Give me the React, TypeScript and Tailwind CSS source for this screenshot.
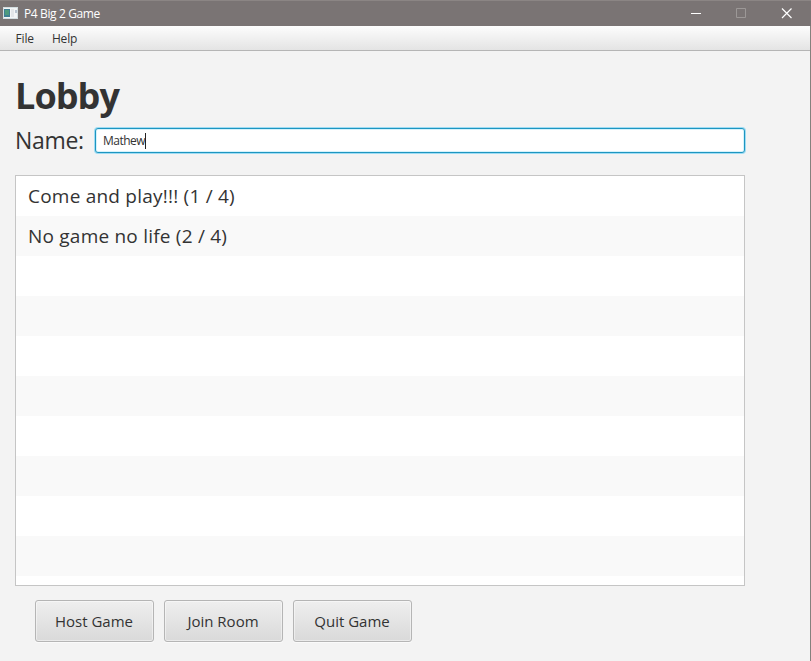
const rows = ["Come and play!!! (1 / 4)", "No game no life (2 / 4)", "", "", "", "", "", "", "", "", ""];

function TitleBar() {
  return (
    <header className="flex h-[26px] shrink-0 items-center border-t border-[#8b8584] bg-[#7a7474] pl-[3px] text-white">
      <svg width="15" height="12" viewBox="0 0 15 12" className="-mt-px shrink-0">
        <rect width="15" height="12" fill="#d3dde0" />
        <rect x="1" y="1" width="13" height="10" fill="#f3f5f6" />
        <rect x="1" y="2" width="6" height="8" fill="#3f7f92" />
        <rect x="2" y="3" width="4" height="5" fill="#4d9a7d" />
        <rect x="8" y="2" width="3" height="8" fill="#e3e6e9" />
        <rect x="12" y="3" width="2" height="3" fill="#b9c4d0" />
      </svg>
      <h1 className="ml-[6px] whitespace-nowrap text-[12px] leading-4 tracking-[-0.38px]">P4 Big 2 Game</h1>
      <div className="-mt-px ml-auto flex items-center">
        <svg width="120" height="24" viewBox="0 0 120 24" fill="none">
          <path d="M0 12.5H10" stroke="#fff" />
          <path d="M45.5 7.5h9v9h-9z" stroke="#9c9897" />
          <path d="M91 7.5l9.500 9.500M100.500 7.500l-9.500 9.500" stroke="#fff" strokeWidth="1.200" />
        </svg>
      </div>
    </header>
  );
}

function MenuBar() {
  return (
    <nav className="flex h-[25px] shrink-0 items-center gap-[18px] border-b border-[#b5b5b5] bg-linear-to-b from-[#fdfdfd] to-[#e4e4e4] pl-[15.500px] pt-[2px] text-[12px] tracking-[-0.15px]">
      <span>File</span>
      <span>Help</span>
    </nav>
  );
}

function GameButton({ label }: { label: string }) {
  return (
    <button className="flex h-[42px] w-[119px] items-center justify-center whitespace-nowrap rounded-[3px] border border-[#b5b5b5] bg-linear-to-b from-[#efefef] to-[#d9d9d9] pr-px pt-px text-[15px] shadow-[inset_0_0_0_1px_rgba(255,255,255,0.45),0_1px_0_#fafafa]">
      {label}
    </button>
  );
}

export default function App() {
  return (
    <div className="flex h-[661px] w-[811px] flex-col overflow-hidden bg-[#f3f3f3] font-['Open_Sans','Noto_Sans',sans-serif] text-[#333]">
      <TitleBar />
      <div className="flex grow flex-col border-r border-[#85817d]">
        <MenuBar />
        <main className="flex flex-col pl-[15px] pt-[21px]">
          <h2 className="h-[48px] text-[36px] font-bold leading-[48px] tracking-[-0.95px]">Lobby</h2>
          <div className="mt-[7px] flex h-[27px] w-[730px] items-center">
            <label className="w-[80px] shrink-0 text-[23px] leading-[27px] tracking-[-0.3px]">Name:</label>
            <div className="flex h-[25px] grow items-center rounded-[3px] border border-[#1d95c0] bg-white pl-[7px] text-[12px] shadow-[0_0_0_1px_#9fdcf3,inset_0_0_0_1px_#d5f2fb]">
              <span className="tracking-[-0.5px]">Mathew</span>
              <span className="h-4 w-px bg-[#222]" />
            </div>
          </div>
          <ul className="mt-[21px] h-[411px] w-[730px] overflow-hidden border border-[#c5c5c5] bg-white">
            {rows.map((r, i) => (
              <li key={i} className="h-10 whitespace-pre pl-3 text-[19px] leading-10 tracking-[0.22px] odd:bg-white even:bg-[#f9f9f9]">{r}</li>
            ))}
          </ul>
          <div className="mt-[14px] flex gap-[10px] pl-5">
            <GameButton label="Host Game" />
            <GameButton label="Join Room" />
            <GameButton label="Quit Game" />
          </div>
        </main>
      </div>
    </div>
  );
}
